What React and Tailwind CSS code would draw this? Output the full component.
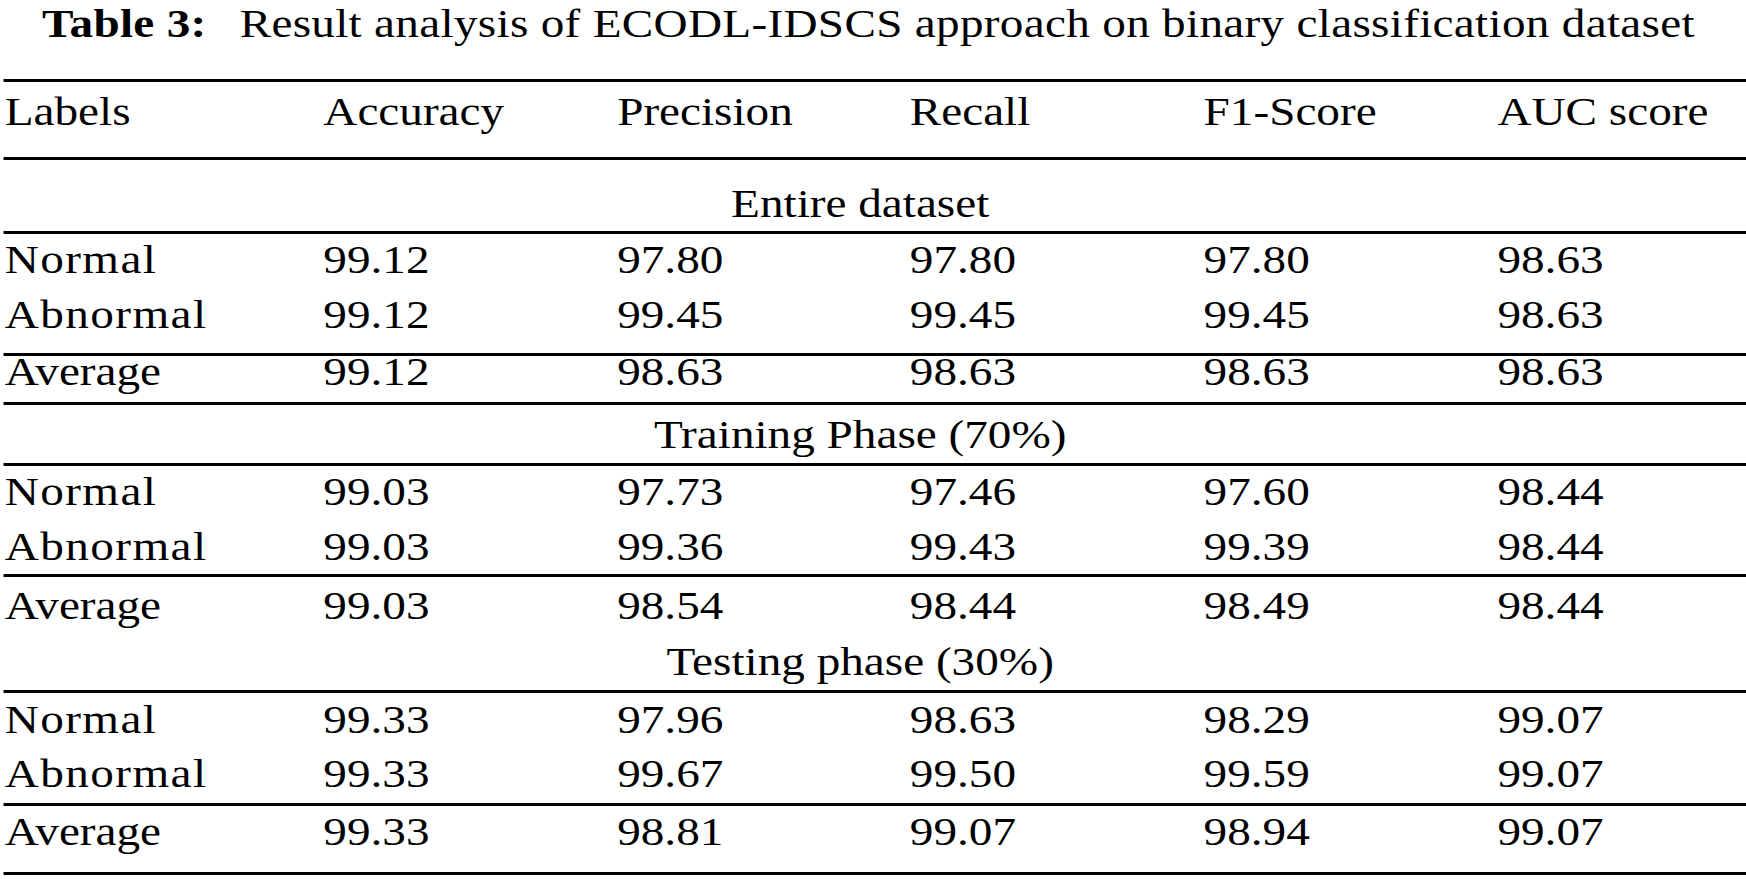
import React from "react";

const GRID = "grid grid-cols-[270px_249px_248px_249px_249px_1fr] pl-[4px]";

function Rule() {
  return <div className="h-[3px] ml-[2.5px] bg-black" />;
}

function Row({ cells, className }) {
  return (
    <div className={`${GRID} ${className}`}>
      {cells.map((c, i) => (
        <div
          key={i}
          className={
            i === 0 && (c === "Normal" || c === "Abnormal")
              ? "whitespace-nowrap tracking-[1.2px]"
              : "whitespace-nowrap"
          }
        >
          {c}
        </div>
      ))}
    </div>
  );
}

function Section({ label, className }) {
  return (
    <div className={`pl-[6px] pr-[28px] text-center whitespace-nowrap ${className}`}>
      {label}
    </div>
  );
}

export default function App() {
  return (
    <div className="w-[1746px] h-[879px] overflow-hidden bg-white text-black">
      <div className="w-[1480px] origin-top-left scale-x-[1.18] font-[Liberation_Serif,Times_New_Roman,serif] text-[40px] leading-[32px]">
        <div className="h-[79px] pt-[8px] pr-[8px] text-center tracking-[0.25px] whitespace-nowrap">
          <span className="font-bold mr-[28px]">Table 3:</span>
          Result analysis of ECODL-IDSCS approach on binary classification dataset
        </div>
        <Rule />
        <Row
          className="h-[75px] pt-[14px]"
          cells={["Labels", "Accuracy", "Precision", "Recall", "F1-Score", "AUC score"]}
        />
        <Rule />
        <Section label="Entire dataset" className="h-[71px] pt-[28px]" />
        <Rule />
        <div className="h-[119px] pt-[10px]">
          <Row className="h-[55px]" cells={["Normal", "99.12", "97.80", "97.80", "97.80", "98.63"]} />
          <Row className="h-[50px]" cells={["Abnormal", "99.12", "99.45", "99.45", "99.45", "98.63"]} />
        </div>
        <Rule />
        <div className="h-[46px]">
          <Row className="h-[46px]" cells={["Average", "99.12", "98.63", "98.63", "98.63", "98.63"]} />
        </div>
        <Rule />
        <Section label="Training Phase (70%)" className="h-[58px] pt-[14px]" />
        <Rule />
        <div className="h-[108px] pt-[10px]">
          <Row className="h-[55px]" cells={["Normal", "99.03", "97.73", "97.46", "97.60", "98.44"]} />
          <Row className="h-[43px]" cells={["Abnormal", "99.03", "99.36", "99.43", "99.39", "98.44"]} />
        </div>
        <Rule />
        <div className="h-[113px] pt-[13px]">
          <Row className="h-[56px]" cells={["Average", "99.03", "98.54", "98.44", "98.49", "98.44"]} />
          <Section label="Testing phase (30%)" className="h-[44px]" />
        </div>
        <Rule />
        <div className="h-[110px] pt-[11px]">
          <Row className="h-[54px]" cells={["Normal", "99.33", "97.96", "98.63", "98.29", "99.07"]} />
          <Row className="h-[45px]" cells={["Abnormal", "99.33", "99.67", "99.50", "99.59", "99.07"]} />
        </div>
        <Rule />
        <div className="h-[66px] pt-[10px]">
          <Row className="h-[56px]" cells={["Average", "99.33", "98.81", "99.07", "98.94", "99.07"]} />
        </div>
        <Rule />
      </div>
    </div>
  );
}
